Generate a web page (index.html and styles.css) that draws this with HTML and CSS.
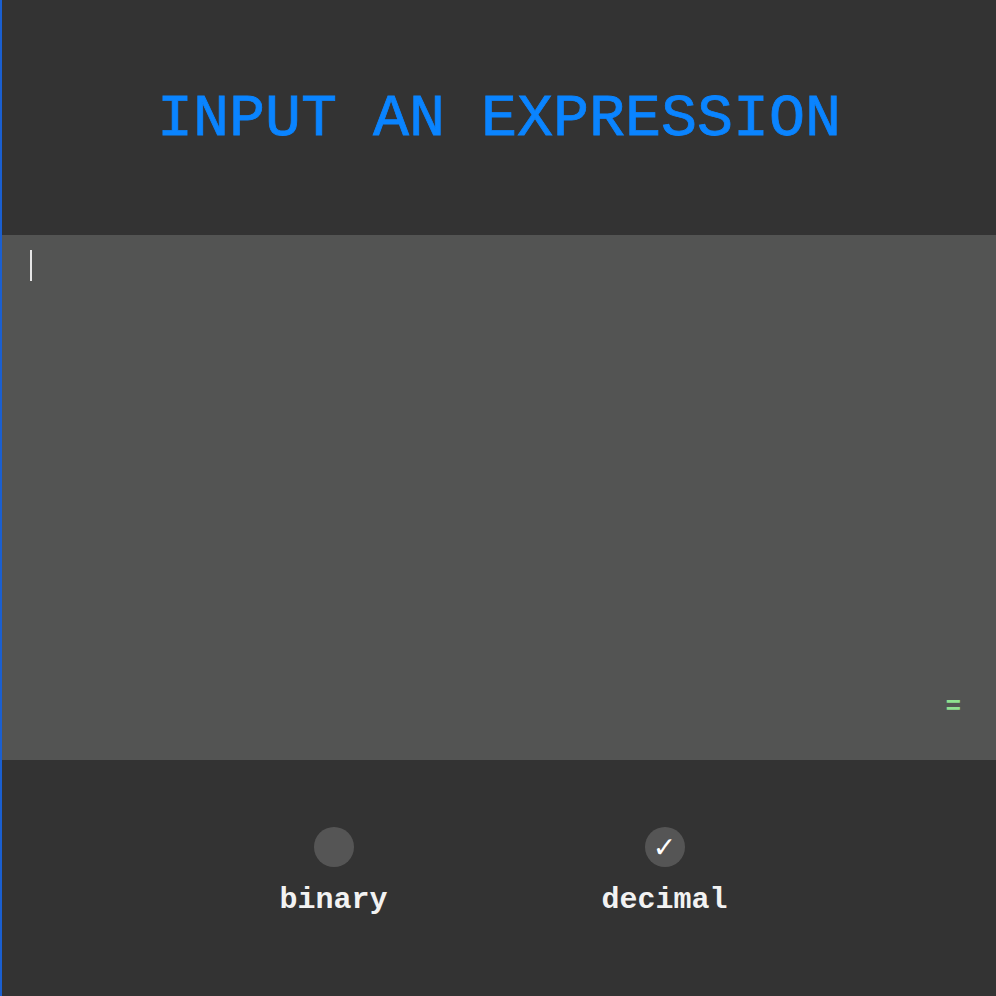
FILE: index.html
```html
<!DOCTYPE html>
<html>
<head>
<meta charset="utf-8">
<link rel="stylesheet" href="styles.css">
</head>
<body>
<div class="app">
  <header class="header">
    <h1 class="title">INPUT AN EXPRESSION</h1>
  </header>
  <main class="editor">
    <textarea class="input" autofocus spellcheck="false"></textarea>
    <span class="caret"></span>
    <span class="equals">=</span>
  </main>
  <footer class="footer">
    <label class="option">
      <span class="dot"></span>
      <span class="label">binary</span>
    </label>
    <label class="option">
      <span class="dot checked">✓</span>
      <span class="label">decimal</span>
    </label>
  </footer>
</div>
</body>
</html>
```
FILE: styles.css
```css
html, body {
  margin: 0;
  padding: 0;
  background: #333333;
}
.app {
  width: 996px;
  height: 996px;
  box-sizing: border-box;
  border-left: 2px solid #1a5fd0;
  display: flex;
  flex-direction: column;
  font-family: "Liberation Mono", "Courier New", monospace;
}
.header {
  height: 235px;
  display: flex;
  align-items: center;
  justify-content: center;
}
.title {
  margin: 0;
  font-size: 60px;
  font-weight: normal;
  color: #0a84ff;
  -webkit-text-stroke: 0.8px #0a84ff;
  padding-top: 2px;
}
.editor {
  position: relative;
  height: 525px;
  background: #535453;
  display: flex;
}
.input {
  flex: 1;
  margin: 0;
  border: none;
  outline: none;
  resize: none;
  background: transparent;
  color: #ffffff;
  caret-color: transparent;
  font-family: "Liberation Mono", monospace;
  font-size: 28px;
  padding: 14px 26px;
}
.caret {
  position: absolute;
  left: 28px;
  top: 15px;
  width: 2px;
  height: 31px;
  background: #e6e6e6;
}
.equals {
  position: absolute;
  right: 35px;
  bottom: 40px;
  color: #8fe08f;
  font-size: 26px;
  font-weight: bold;
  line-height: 1;
}
.footer {
  flex: 1;
  display: flex;
  justify-content: center;
  gap: 131px;
  padding-top: 67px;
  box-sizing: border-box;
}
.option {
  width: 200px;
  display: flex;
  flex-direction: column;
  align-items: center;
  gap: 18px;
}
.dot {
  width: 40px;
  height: 40px;
  border-radius: 50%;
  background: #555555;
  color: #ffffff;
  display: flex;
  align-items: center;
  justify-content: center;
  font-family: "DejaVu Sans", sans-serif;
  font-size: 28px;
  font-weight: bold;
}
.label {
  color: #f2f2f2;
  font-size: 30px;
  font-weight: bold;
  line-height: 1;
}
```
